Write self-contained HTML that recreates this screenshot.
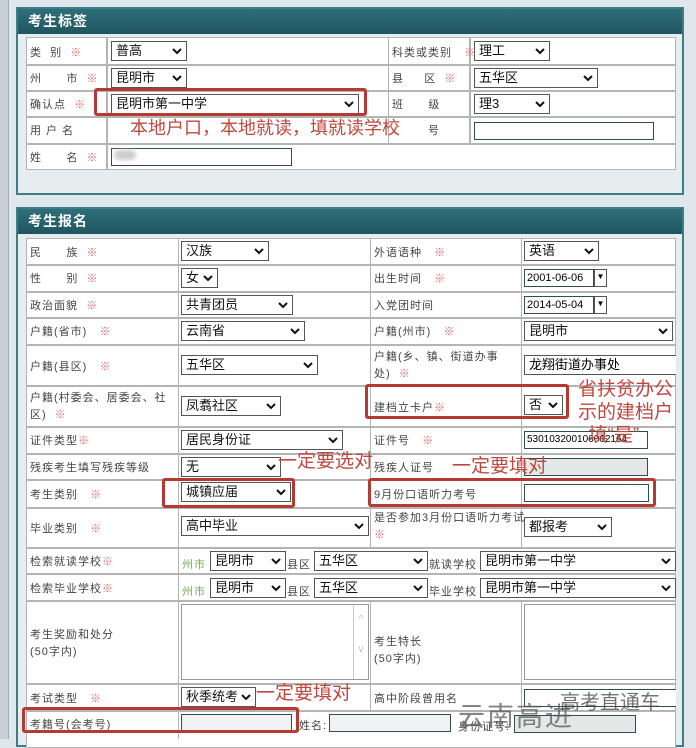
<!DOCTYPE html>
<html><head><meta charset="utf-8">
<style>
*{margin:0;padding:0;box-sizing:border-box}
body{width:696px;height:739px;overflow:hidden;background:#dfe7ea;font-family:"Liberation Sans","Noto Sans CJK SC",sans-serif;position:relative}
.a{position:absolute}
.panel{position:absolute;background:#e6edef;border:2px solid #3f7d86}
.hdr{position:absolute;left:0;right:0;top:0;height:25px;background:linear-gradient(#2f6f79,#1f5560);color:#fff;font-weight:bold;font-size:14px;line-height:25px;padding-left:10px;letter-spacing:1px}
.line{position:absolute;background:#b4b4b4}
.lb{position:absolute;font-size:11px;color:#444;white-space:nowrap;letter-spacing:1px}
.st{color:#d66}
.sel{position:absolute;background:#fff;border:1px solid #555;height:20px;font-size:13px;line-height:18px;padding-left:4px;color:#111;white-space:nowrap;overflow:hidden}
.sel svg{position:absolute;right:4px;top:6px}
.inp{position:absolute;background:#fff;border:1px solid #2f4f4f;height:18px;font-size:11px;line-height:16px;padding-left:2px}
.red{position:absolute;border:3px solid #b53a33;border-radius:3px}
.rt{position:absolute;color:#c0483f;font-size:19px;white-space:nowrap;line-height:22px}
</style></head><body>
<div class="a" style="left:0;top:0;width:9px;height:739px;background:#c9d0d4;border-right:1px solid #aab"></div>

<div class="panel" style="left:16px;top:7px;width:668px;height:188px"><div class="hdr">考生标签</div></div>
<div class="a" style="left:26px;top:37px;width:650px;height:133px;background:#fff;border:1px solid #b4b4b4"></div>
<div class="line" style="left:26px;top:64px;width:650px;height:2px"></div>
<div class="line" style="left:26px;top:90px;width:650px;height:2px"></div>
<div class="line" style="left:26px;top:116px;width:650px;height:2px"></div>
<div class="line" style="left:26px;top:143px;width:650px;height:2px"></div>
<div class="line" style="left:106px;top:37px;width:2px;height:133px"></div>
<div class="line" style="left:388px;top:37px;width:1px;height:106px"></div>
<div class="line" style="left:469px;top:37px;width:2px;height:106px"></div>

<div class="lb" style="left:30px;top:44px">类&nbsp;&nbsp;别&nbsp;&nbsp;<span class="st">※</span></div>
<div class="lb" style="left:30px;top:70px">州&nbsp;&nbsp;&nbsp;&nbsp;&nbsp;&nbsp;市&nbsp;&nbsp;<span class="st">※</span></div>
<div class="lb" style="left:30px;top:96px">确认点&nbsp;&nbsp;<span class="st">※</span></div>
<div class="lb" style="left:30px;top:122px">用&nbsp;户&nbsp;名</div>
<div class="lb" style="left:30px;top:149px">姓&nbsp;&nbsp;&nbsp;&nbsp;&nbsp;&nbsp;名&nbsp;&nbsp;<span class="st">※</span></div>
<div class="sel" style="left:111px;top:41px;width:76px">普高<svg width="10" height="7"><path d="M1 1L5 5L9 1" stroke="#111" stroke-width="2" fill="none"/></svg></div>
<div class="sel" style="left:111px;top:68px;width:76px">昆明市<svg width="10" height="7"><path d="M1 1L5 5L9 1" stroke="#111" stroke-width="2" fill="none"/></svg></div>
<div class="sel" style="left:111px;top:94px;width:248px">昆明市第一中学<svg width="10" height="7"><path d="M1 1L5 5L9 1" stroke="#111" stroke-width="2" fill="none"/></svg></div>
<div class="inp" style="left:111px;top:148px;width:181px"></div>
<div class="a" style="left:114px;top:150px;width:22px;height:10px;background:#ccc;border-radius:5px;filter:blur(2px)"></div>
<div class="lb" style="left:392px;top:44px">科类或类别&nbsp;&nbsp;&nbsp;<span class="st">※</span></div>
<div class="lb" style="left:392px;top:70px">县&nbsp;&nbsp;&nbsp;&nbsp;&nbsp;区&nbsp;&nbsp;<span class="st">※</span></div>
<div class="lb" style="left:392px;top:96px">班&nbsp;&nbsp;&nbsp;&nbsp;&nbsp;&nbsp;级</div>
<div class="lb" style="left:428px;top:122px">号</div>
<div class="sel" style="left:474px;top:41px;width:76px">理工<svg width="10" height="7"><path d="M1 1L5 5L9 1" stroke="#111" stroke-width="2" fill="none"/></svg></div>
<div class="sel" style="left:474px;top:68px;width:124px">五华区<svg width="10" height="7"><path d="M1 1L5 5L9 1" stroke="#111" stroke-width="2" fill="none"/></svg></div>
<div class="sel" style="left:474px;top:94px;width:76px">理3<svg width="10" height="7"><path d="M1 1L5 5L9 1" stroke="#111" stroke-width="2" fill="none"/></svg></div>
<div class="inp" style="left:474px;top:122px;width:180px"></div>
<div class="red" style="left:94px;top:88px;width:273px;height:28px"></div>
<div class="rt" style="left:130px;top:117px;font-size:18px">本地户口，本地就读，填就读学校</div>

<div class="panel" style="left:16px;top:207px;width:668px;height:540px"><div class="hdr">考生报名</div></div>
<div class="a" style="left:26px;top:238px;width:650px;height:510px;background:#fff;border:1px solid #b4b4b4"></div>
<div class="line" style="left:26px;top:264px;width:650px;height:2px"></div>
<div class="line" style="left:26px;top:291px;width:650px;height:2px"></div>
<div class="line" style="left:26px;top:317px;width:650px;height:2px"></div>
<div class="line" style="left:26px;top:344px;width:650px;height:2px"></div>
<div class="line" style="left:26px;top:385px;width:650px;height:2px"></div>
<div class="line" style="left:26px;top:426px;width:650px;height:2px"></div>
<div class="line" style="left:26px;top:453px;width:650px;height:2px"></div>
<div class="line" style="left:26px;top:479px;width:650px;height:2px"></div>
<div class="line" style="left:26px;top:507px;width:650px;height:2px"></div>
<div class="line" style="left:26px;top:547px;width:650px;height:2px"></div>
<div class="line" style="left:26px;top:573px;width:650px;height:2px"></div>
<div class="line" style="left:26px;top:600px;width:650px;height:2px"></div>
<div class="line" style="left:26px;top:683px;width:650px;height:2px"></div>
<div class="line" style="left:26px;top:710px;width:650px;height:2px"></div>
<div class="line" style="left:178px;top:238px;width:1px;height:501px"></div>
<div class="line" style="left:370px;top:238px;width:1px;height:309px"></div>
<div class="line" style="left:370px;top:600px;width:1px;height:110px"></div>
<div class="line" style="left:521px;top:238px;width:1px;height:309px"></div>
<div class="line" style="left:521px;top:600px;width:1px;height:110px"></div>

<div class="lb" style="left:30px;top:244px">民&nbsp;&nbsp;&nbsp;&nbsp;&nbsp;&nbsp;族&nbsp;&nbsp;<span class="st">※</span></div>
<div class="lb" style="left:30px;top:270px">性&nbsp;&nbsp;&nbsp;&nbsp;&nbsp;&nbsp;别&nbsp;&nbsp;<span class="st">※</span></div>
<div class="lb" style="left:30px;top:297px">政治面貌&nbsp;&nbsp;<span class="st">※</span></div>
<div class="lb" style="left:30px;top:323px">户籍(省市)&nbsp;&nbsp;&nbsp;<span class="st">※</span></div>
<div class="lb" style="left:30px;top:358px">户籍(县区)&nbsp;&nbsp;&nbsp;<span class="st">※</span></div>
<div class="lb" style="left:30px;top:390px;line-height:17px">户籍(村委会、居委会、社<br>区)&nbsp;&nbsp;<span class="st">※</span></div>
<div class="lb" style="left:30px;top:432px">证件类型<span class="st">※</span></div>
<div class="lb" style="left:30px;top:459px">残疾考生填写残疾等级</div>
<div class="lb" style="left:30px;top:486px">考生类别&nbsp;&nbsp;&nbsp;<span class="st">※</span></div>
<div class="lb" style="left:30px;top:520px">毕业类别&nbsp;&nbsp;&nbsp;<span class="st">※</span></div>
<div class="lb" style="left:30px;top:553px">检索就读学校<span class="st">※</span></div>
<div class="lb" style="left:30px;top:580px">检索毕业学校<span class="st">※</span></div>
<div class="lb" style="left:30px;top:627px;line-height:17px">考生奖励和处分<br>(50字内)</div>
<div class="lb" style="left:30px;top:690px">考试类型&nbsp;&nbsp;&nbsp;<span class="st">※</span></div>
<div class="lb" style="left:30px;top:716px">考籍号(会考号)</div>

<div class="sel" style="left:181px;top:241px;width:88px">汉族<svg width="10" height="7"><path d="M1 1L5 5L9 1" stroke="#111" stroke-width="2" fill="none"/></svg></div>
<div class="sel" style="left:181px;top:268px;width:37px">女<svg width="10" height="7"><path d="M1 1L5 5L9 1" stroke="#111" stroke-width="2" fill="none"/></svg></div>
<div class="sel" style="left:181px;top:295px;width:112px">共青团员<svg width="10" height="7"><path d="M1 1L5 5L9 1" stroke="#111" stroke-width="2" fill="none"/></svg></div>
<div class="sel" style="left:181px;top:321px;width:124px">云南省<svg width="10" height="7"><path d="M1 1L5 5L9 1" stroke="#111" stroke-width="2" fill="none"/></svg></div>
<div class="sel" style="left:181px;top:355px;width:137px">五华区<svg width="10" height="7"><path d="M1 1L5 5L9 1" stroke="#111" stroke-width="2" fill="none"/></svg></div>
<div class="sel" style="left:181px;top:396px;width:100px">凤翥社区<svg width="10" height="7"><path d="M1 1L5 5L9 1" stroke="#111" stroke-width="2" fill="none"/></svg></div>
<div class="sel" style="left:181px;top:430px;width:162px">居民身份证<svg width="10" height="7"><path d="M1 1L5 5L9 1" stroke="#111" stroke-width="2" fill="none"/></svg></div>
<div class="sel" style="left:181px;top:457px;width:100px">无<svg width="10" height="7"><path d="M1 1L5 5L9 1" stroke="#111" stroke-width="2" fill="none"/></svg></div>
<div class="sel" style="left:181px;top:482px;width:110px">城镇应届<svg width="10" height="7"><path d="M1 1L5 5L9 1" stroke="#111" stroke-width="2" fill="none"/></svg></div>
<div class="sel" style="left:181px;top:516px;width:188px">高中毕业<svg width="10" height="7"><path d="M1 1L5 5L9 1" stroke="#111" stroke-width="2" fill="none"/></svg></div>
<div class="lb" style="left:182px;top:556px;color:#7a5">州市</div>
<div class="sel" style="left:210px;top:551px;width:76px">昆明市<svg width="10" height="7"><path d="M1 1L5 5L9 1" stroke="#111" stroke-width="2" fill="none"/></svg></div>
<div class="lb" style="left:287px;top:556px">县区</div>
<div class="sel" style="left:314px;top:551px;width:114px">五华区<svg width="10" height="7"><path d="M1 1L5 5L9 1" stroke="#111" stroke-width="2" fill="none"/></svg></div>
<div class="lb" style="left:429px;top:556px">就读学校</div>
<div class="sel" style="left:480px;top:551px;width:196px">昆明市第一中学<svg width="10" height="7"><path d="M1 1L5 5L9 1" stroke="#111" stroke-width="2" fill="none"/></svg></div>
<div class="lb" style="left:182px;top:583px;color:#7a5">州市</div>
<div class="sel" style="left:210px;top:578px;width:76px">昆明市<svg width="10" height="7"><path d="M1 1L5 5L9 1" stroke="#111" stroke-width="2" fill="none"/></svg></div>
<div class="lb" style="left:287px;top:583px">县区</div>
<div class="sel" style="left:314px;top:578px;width:114px">五华区<svg width="10" height="7"><path d="M1 1L5 5L9 1" stroke="#111" stroke-width="2" fill="none"/></svg></div>
<div class="lb" style="left:429px;top:583px">毕业学校</div>
<div class="sel" style="left:480px;top:578px;width:196px">昆明市第一中学<svg width="10" height="7"><path d="M1 1L5 5L9 1" stroke="#111" stroke-width="2" fill="none"/></svg></div>
<div class="a" style="left:181px;top:604px;width:188px;height:76px;border:1px solid #999"></div>
<div class="a" style="left:353px;top:605px;width:15px;height:74px;border-left:1px solid #ccc;color:#bbb;font-size:10px;text-align:center;line-height:30px">^<br>v</div>
<div class="sel" style="left:181px;top:687px;width:75px">秋季统考<svg width="10" height="7"><path d="M1 1L5 5L9 1" stroke="#111" stroke-width="2" fill="none"/></svg></div>
<div class="inp" style="left:181px;top:714px;width:111px;background:#eef2f2"></div>
<div class="lb" style="left:299px;top:717px">姓名:</div>
<div class="inp" style="left:329px;top:714px;width:122px;background:#eef2f2"></div>

<div class="lb" style="left:374px;top:244px">外语语种&nbsp;&nbsp;&nbsp;<span class="st">※</span></div>
<div class="lb" style="left:374px;top:270px">出生时间&nbsp;&nbsp;&nbsp;<span class="st">※</span></div>
<div class="lb" style="left:374px;top:297px">入党团时间</div>
<div class="lb" style="left:374px;top:323px">户籍(州市)&nbsp;&nbsp;&nbsp;<span class="st">※</span></div>
<div class="lb" style="left:374px;top:349px;line-height:17px">户籍(乡、镇、街道办事<br>处)&nbsp;&nbsp;<span class="st">※</span></div>
<div class="lb" style="left:374px;top:399px">建档立卡户<span class="st">※</span></div>
<div class="lb" style="left:374px;top:432px">证件号&nbsp;&nbsp;&nbsp;<span class="st">※</span></div>
<div class="lb" style="left:374px;top:459px">残疾人证号</div>
<div class="lb" style="left:374px;top:486px">9月份口语听力考号</div>
<div class="lb" style="left:374px;top:510px;line-height:17px">是否参加3月份口语听力考试<br><span class="st">※</span></div>
<div class="lb" style="left:374px;top:634px;line-height:17px">考生特长<br>(50字内)</div>
<div class="lb" style="left:374px;top:690px">高中阶段曾用名</div>

<div class="sel" style="left:524px;top:241px;width:75px">英语<svg width="10" height="7"><path d="M1 1L5 5L9 1" stroke="#111" stroke-width="2" fill="none"/></svg></div>
<div class="inp" style="left:524px;top:269px;width:70px;font-size:11px">2001-06-06</div>
<div class="a" style="left:594px;top:269px;width:13px;height:18px;border:1px solid #555;background:#fff;font-size:8px;text-align:center;line-height:14px">▼</div>
<div class="inp" style="left:524px;top:296px;width:70px;font-size:11px">2014-05-04</div>
<div class="a" style="left:594px;top:296px;width:13px;height:18px;border:1px solid #555;background:#fff;font-size:8px;text-align:center;line-height:14px">▼</div>
<div class="sel" style="left:524px;top:321px;width:149px">昆明市<svg width="10" height="7"><path d="M1 1L5 5L9 1" stroke="#111" stroke-width="2" fill="none"/></svg></div>
<div class="a" style="left:524px;top:355px;width:152px;height:20px;border:1px solid #555;border-right:none;font-size:13px;line-height:18px;padding-left:4px;background:#fff">龙翔街道办事处</div>
<div class="sel" style="left:524px;top:395px;width:39px">否<svg width="10" height="7"><path d="M1 1L5 5L9 1" stroke="#111" stroke-width="2" fill="none"/></svg></div>
<div class="inp" style="left:524px;top:431px;width:124px;font-size:10px">530103200106062164</div>
<div class="inp" style="left:524px;top:458px;width:124px;background:#e4e8e8"></div>
<div class="inp" style="left:524px;top:484px;width:125px"></div>
<div class="sel" style="left:524px;top:517px;width:88px">都报考<svg width="10" height="7"><path d="M1 1L5 5L9 1" stroke="#111" stroke-width="2" fill="none"/></svg></div>
<div class="a" style="left:524px;top:604px;width:152px;height:76px;border:1px solid #999;border-right:none"></div>
<div class="inp" style="left:524px;top:689px;width:152px;border-right:none"></div>
<div class="lb" style="left:458px;top:718px">身份证号:</div>
<div class="inp" style="left:514px;top:715px;width:122px;background:#e4e8e8"></div>

<div class="red" style="left:365px;top:384px;width:204px;height:35px"></div>
<div class="rt" style="left:578px;top:378px;line-height:23px">省扶贫办公<br>示的建档户<br>&nbsp;&nbsp;填“是”</div>
<div class="rt" style="left:278px;top:451px">一定要选对</div>
<div class="rt" style="left:452px;top:456px">一定要填对</div>
<div class="red" style="left:162px;top:478px;width:133px;height:30px"></div>
<div class="red" style="left:368px;top:478px;width:288px;height:29px"></div>
<div class="rt" style="left:256px;top:683px">一定要填对</div>
<div class="red" style="left:22px;top:707px;width:277px;height:26px"></div>
<div class="a" style="left:458px;top:695px;color:rgba(90,90,90,.75);font-size:27px;letter-spacing:2px;white-space:nowrap">云南高进</div>
<div class="a" style="left:560px;top:686px;color:rgba(80,80,80,.8);font-size:20px;white-space:nowrap">高考直通车</div>
</body></html>
